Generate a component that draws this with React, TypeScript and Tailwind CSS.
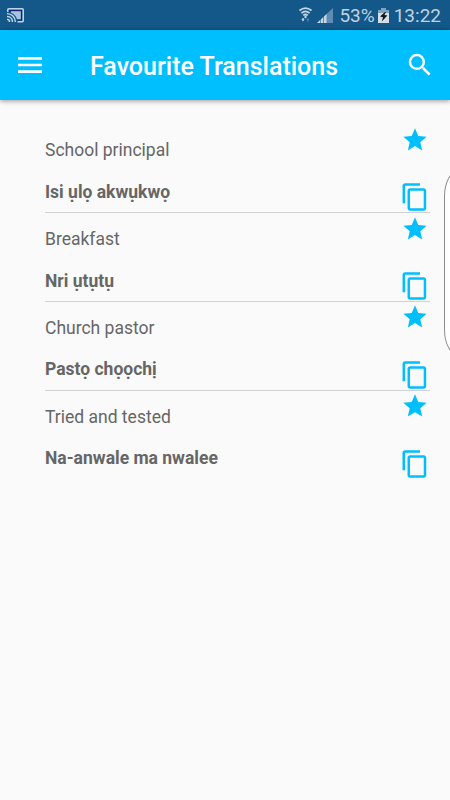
import React from 'react'
import { MdContentCopy, MdMenu, MdSearch, MdStar } from 'react-icons/md'

interface Translation {
  source: string
  target: string
}

const favourites: Translation[] = [
  { source: 'School principal', target: 'Isi ụlọ akwụkwọ' },
  { source: 'Breakfast', target: 'Nri ụtụtụ' },
  { source: 'Church pastor', target: 'Pastọ chọọchị' },
  { source: 'Tried and tested', target: 'Na-anwale ma nwalee' }
]

function CastIcon() {
  return (
    <svg width="17" height="15" viewBox="0 0 17 15" fill="none">
      <path d="M0.8 4V1.8Q0.8 0.8 1.8 0.8H15.2Q16.2 0.8 16.2 1.8V12.7Q16.2 13.7 15.2 13.7H10.5" stroke="#bfd3e6" strokeWidth="1.6" />
      <path d="M2.5 4V2.5H14.5V12H10" stroke="#15207a" strokeWidth="1.2" />
      <path d="M4 3.2H13.8V11.3H10C9.2 8 7 5.6 4 4.7Z" fill="#a9c4dc" />
      <path d="M0 5.6C4.8 5.6 8.4 9.2 8.4 14M0 8.5C3.2 8.5 5.5 10.8 5.5 14M0 11.4C1.6 11.4 2.6 12.4 2.6 14" stroke="#c8daea" strokeWidth="1.4" />
    </svg>
  )
}

function WifiIcon() {
  return (
    <svg width="13" height="16" viewBox="0 0 13 16" fill="none">
      <path d="M0.5 3.6Q6.5 -1.4 12.5 3.6M2.4 6.1Q6.5 2.6 10.6 6.1M4.3 8.4Q6.5 6.6 8.7 8.4" stroke="#c5d6e5" strokeWidth="1.8" />
      <circle cx="6.5" cy="10" r="1.2" fill="#c5d6e5" />
      <path d="M2.4 12.2H3.3V11H4.7V12.2H5.6L4 14.6Z" fill="#c5d6e5" />
      <path d="M7.4 13L8.9 11L10.4 13H9.5V14.6H8.3V13Z" fill="#5685ab" />
    </svg>
  )
}

function SignalIcon() {
  return (
    <svg width="16" height="15" viewBox="0 0 16 15">
      <path d="M0 15L16 0V15Z" fill="#5f8db2" />
      <path d="M0 15L3 12.2V15ZM4 15V11.2L6 9.4V15ZM7 15V8.4L9.5 6V15Z" fill="#c5d6e5" />
    </svg>
  )
}

function BatteryIcon() {
  return (
    <svg width="11" height="15" viewBox="0 0 11 15">
      <path d="M3 0H8V2H11V5H0V2H3Z" fill="#7fa3bf" />
      <path d="M0 5H11V15H0Z" fill="#d3dee7" />
      <path d="M7 4L2 8.6L5 9.2L3.8 13.5L9.4 7.6L6.4 7L8 4Z" fill="#101820" />
    </svg>
  )
}

function StatusBar() {
  return (
    <div className="flex h-[30px] items-center justify-between border-b border-[#145080] bg-[#145889] pt-px pr-[9px] pl-[7px] text-[#bfd3e4]">
      <CastIcon />
      <div className="flex items-center">
        <WifiIcon />
        <span className="ml-[5px]"><SignalIcon /></span>
        <span className="ml-[6px] pt-px text-[19px] leading-none">53%</span>
        <span className="ml-[3px]"><BatteryIcon /></span>
        <span className="ml-[5px] pt-px text-[19px] leading-none">13:22</span>
      </div>
    </div>
  )
}

export default function App() {
  return (
    <div className="relative h-[800px] w-[450px] overflow-hidden bg-[#fafafa] font-['Roboto',sans-serif]">
      <StatusBar />

      <header className="flex h-[70px] items-center bg-[#00bfff] pr-[15px] pl-[14px] text-white shadow-[0_1px_5px_rgba(0,0,0,0.4)]">
        <MdMenu size={32} />
        <h1 className="ml-[44px] flex-1 pt-[2px] text-[25px] leading-none font-medium whitespace-nowrap">Favourite Translations</h1>
        <MdSearch size={30} />
      </header>

      <ul className="pt-[24.6px] pr-[20px] pl-[45px]">
        {favourites.map(item => (
          <li
            key={item.source}
            className="flex h-[88.75px] justify-between border-b border-[#d2d2d2] last:border-b-0"
          >
            <div className="pt-[13.7px] text-[#666]">
              <p className="text-[17.5px] leading-6">{item.source}</p>
              <p className="mt-[17.5px] text-[17.5px] leading-6 font-bold">{item.target}</p>
            </div>
            <div className="flex flex-col items-center pt-[1.4px] text-[#00bfff]">
              <MdStar size={28} />
              <MdContentCopy size={30} className="mt-[28.6px]" />
            </div>
          </li>
        ))}
      </ul>

      {/* Edge panel handle, mostly off screen */}
      <div className="absolute top-[170px] left-[444px] h-[186px] w-[30px] rounded-[16px/28px] border border-[#8c8c8c] bg-white" />
    </div>
  )
}
